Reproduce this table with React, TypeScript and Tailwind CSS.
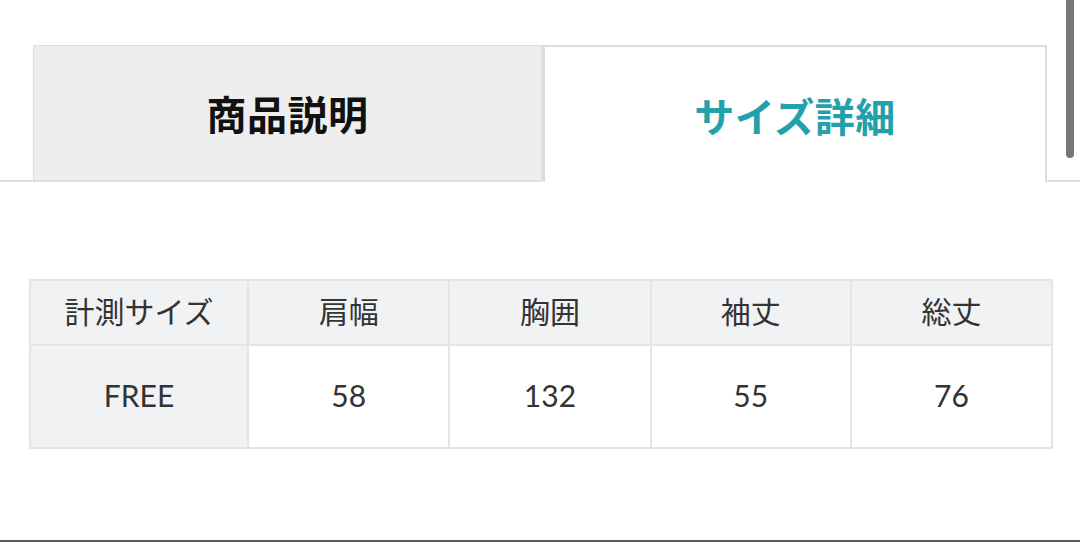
import React from "react";

const font = { fontFamily: 'Lato, "Noto Sans CJK JP", sans-serif' };

export default function App() {
  const headers = ["計測サイズ", "肩幅", "胸囲", "袖丈", "総丈"];
  const values = ["FREE", "58", "132", "55", "76"];
  const widths = ["w-[217px]", "w-[202px]", "w-[202px]", "w-[201px]", "w-[202px]"];
  return (
    <div
      className="relative w-[1080px] h-[542px] bg-white flex flex-col overflow-hidden"
      style={font}
    >
      {/* scrollbar */}
      <div className="absolute right-[6px] top-[-6px] w-[8px] h-[164px] rounded-full bg-[#777]" />

      <div className="pt-[45px] flex items-end">
        <div className="w-[33px] border-b-2 border-[#dcdcdc]" />
        <div className="w-[510px] h-[137px] bg-[#eeeeee] border-t border-l border-r-2 border-b-2 border-[#dedede] rounded-br-[3px] flex items-center justify-center pt-1">
          <span className="text-[40px] font-bold text-[#111] leading-none tracking-[0.5px]">
            商品説明
          </span>
        </div>
        <div className="w-[504px] h-[137px] bg-white border-t-2 border-l-2 border-r-2 border-[#dcdcdc] flex items-center justify-center pt-1">
          <span className="text-[40px] font-bold text-[#23a1ab] leading-none tracking-[0.5px]">
            サイズ詳細
          </span>
        </div>
        <div className="flex-1 border-b-2 border-[#dcdcdc] rounded-bl-[3px]" />
      </div>

      <div className="mt-[97px] ml-[29px] w-[1024px] border-2 border-[#e4e4e4] text-[#333] text-[30px]">
        <div className="flex h-[63px] bg-[#f1f2f4]">
          {headers.map((h, i) => (
            <div
              key={h}
              className={`${widths[i]} flex items-center justify-center pb-[3px] ${i > 0 ? "border-l-2 border-[#e4e4e4]" : ""}`}
            >
              {h}
            </div>
          ))}
        </div>
        <div className="flex h-[103px] border-t-2 border-[#e4e4e4]">
          {values.map((v, i) => (
            <div
              key={i}
              className={`${widths[i]} flex items-center justify-center pb-[2px] ${i === 0 ? "bg-[#f1f2f4]" : "bg-white border-l-2 border-[#e4e4e4]"}`}
            >
              {v}
            </div>
          ))}
        </div>
      </div>

      <div className="mt-auto h-[2px] bg-[#5a5a5a]" />
    </div>
  );
}
